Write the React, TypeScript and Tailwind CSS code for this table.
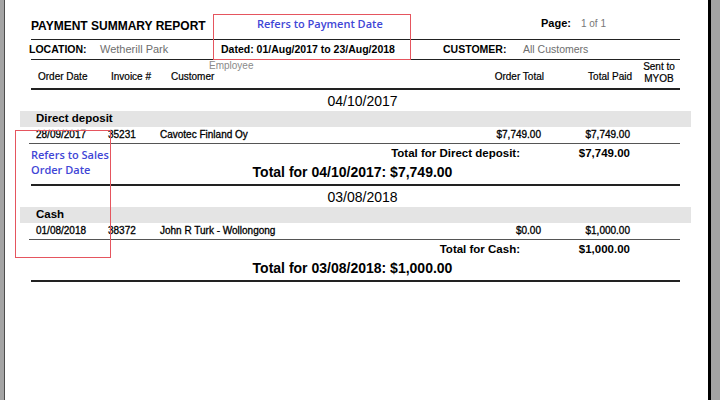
import React from "react";

type Order = { date: string; invoice: string; customer: string; total: string; paid: string };
type Group = { method: string; orders: Order[]; total: string };
type Day = { date: string; groups: Group[]; total: string };

const days: Day[] = [
  {
    date: "04/10/2017",
    groups: [
      {
        method: "Direct deposit",
        orders: [
          { date: "28/09/2017", invoice: "35231", customer: "Cavotec Finland Oy", total: "$7,749.00", paid: "$7,749.00" },
        ],
        total: "$7,749.00",
      },
    ],
    total: "$7,749.00",
  },
  {
    date: "03/08/2018",
    groups: [
      {
        method: "Cash",
        orders: [
          { date: "01/08/2018", invoice: "38372", customer: "John R Turk - Wollongong", total: "$0.00", paid: "$1,000.00" },
        ],
        total: "$1,000.00",
      },
    ],
    total: "$1,000.00",
  },
];

function DayBlock({ day }: { day: Day }) {
  return (
    <>
      <div className="flex h-[21px] items-center justify-center pl-[14px] text-[14px] leading-none">
        {day.date}
      </div>
      {day.groups.map((g) => (
        <div key={g.method}>
          <div className="flex h-[16px] items-center bg-[#e4e4e4] pl-[16px] text-[11.5px] font-bold">
            {g.method}
          </div>
          {g.orders.map((o) => (
            <div
              key={o.invoice}
              className="grid h-[16px] grid-cols-[88px_52px_1fr_90px_89px] items-center pr-[61px] text-[10px] leading-none [-webkit-text-stroke:0.3px_black]"
            >
              <span className="pl-[16px]">{o.date}</span>
              <span>{o.invoice}</span>
              <span>{o.customer}</span>
              <span className="text-right">{o.total}</span>
              <span className="text-right">{o.paid}</span>
            </div>
          ))}
          <div className="ml-[9px] mr-[11px] h-px bg-[#555]" />
          <div className="flex h-[19px] items-center justify-end pr-[61px] text-[11.5px] font-bold">
            <span className="mr-[21px]">Total for {g.method}:</span>
            <span className="w-[89px] text-right">{g.total}</span>
          </div>
        </div>
      ))}
      <div className="flex h-[21px] items-center justify-center pb-[3px] pr-[6px] text-[14px] font-bold leading-none">
        Total for {day.date}: {day.total}
      </div>
      <div className="mx-[11px] h-[2px] bg-[#222]" />
    </>
  );
}

export default function App() {
  return (
    <div className="relative flex h-[400px] w-[720px] overflow-hidden bg-[#a4a4a4] font-['Liberation_Sans',Arial,sans-serif] text-black">
      <div className="w-[4px] shrink-0" />
      <div className="flex-1 border-l border-r-[3px] border-l-[#4d4d4d] border-r-black bg-white">
        <div className="pl-[15px] pr-[17px]">
          <div className="grid h-[39px] grid-cols-[521px_1fr] items-start">
            <h1 className="mt-[19px] pl-[11px] text-[12px] font-bold leading-[14px]">PAYMENT SUMMARY REPORT</h1>
            <div className="mt-[16px] flex items-baseline gap-[10px] leading-[14px]">
              <span className="text-[11px] font-bold">Page:</span>
              <span className="text-[10px] text-[#777]">1 of 1</span>
            </div>
          </div>
          <div className="mx-[11px] h-px bg-[#222]" />

          <div className="grid h-[19px] grid-cols-[80px_121px_222px_80px_1fr] items-center leading-none">
            <span className="pl-[9px] text-[10.5px] font-bold">LOCATION:</span>
            <span className="text-[11px] text-[#6e6e6e]">Wetherill Park</span>
            <span className="text-[10.5px] font-bold">Dated: 01/Aug/2017 to 23/Aug/2018</span>
            <span className="text-[10.5px] font-bold">CUSTOMER:</span>
            <span className="text-[10.5px] text-[#6e6e6e]">All Customers</span>
          </div>
          <div className="mx-[11px] h-px bg-[#222]" />

          <div className="grid h-[28px] grid-cols-[91px_60px_1fr_93px_88px_11px_32px] items-start pr-[16px] text-[10px]">
            <span className="mt-[11px] pl-[18px] leading-[12px] [-webkit-text-stroke:0.2px_black]">Order Date</span>
            <span className="mt-[11px] leading-[12px] [-webkit-text-stroke:0.2px_black]">Invoice #</span>
            <div className="mt-[1px] flex flex-col">
              <span className="pl-[38px] leading-[10px] text-[#8a8a8a]">Employee</span>
              <span className="leading-[12px] [-webkit-text-stroke:0.2px_black]">Customer</span>
            </div>
            <span className="mt-[11px] text-right leading-[12px] [-webkit-text-stroke:0.2px_black]">Order Total</span>
            <span className="mt-[11px] text-right leading-[12px] [-webkit-text-stroke:0.2px_black]">Total Paid</span>
            <span />
            <span className="mt-[1px] whitespace-nowrap text-center leading-[12px] [-webkit-text-stroke:0.2px_black]">
              Sent to
              <br />
              MYOB
            </span>
          </div>
          <div className="mx-[11px] h-[2px] bg-[#222]" />

          {days.map((d) => (
            <DayBlock key={d.date} day={d} />
          ))}
        </div>
      </div>

      <div className="w-[9px] shrink-0" />

      <div className="absolute left-[213px] top-[14px] h-[46px] w-[198px] border border-[#e5555e]">
        <p className="ml-[43px] mt-[1px] font-['Open_Sans',sans-serif] text-[11px] font-semibold leading-[15px] text-[#3f46d6]">
          Refers to Payment Date
        </p>
      </div>
      <div className="absolute left-[15px] top-[130px] h-[128px] w-[96px] border border-[#e5555e]">
        <p className="ml-[15px] mt-[16px] font-['Open_Sans',sans-serif] text-[11px] font-semibold leading-[15px] text-[#3f46d6]">
          Refers to Sales
          <br />
          Order Date
        </p>
      </div>
    </div>
  );
}
